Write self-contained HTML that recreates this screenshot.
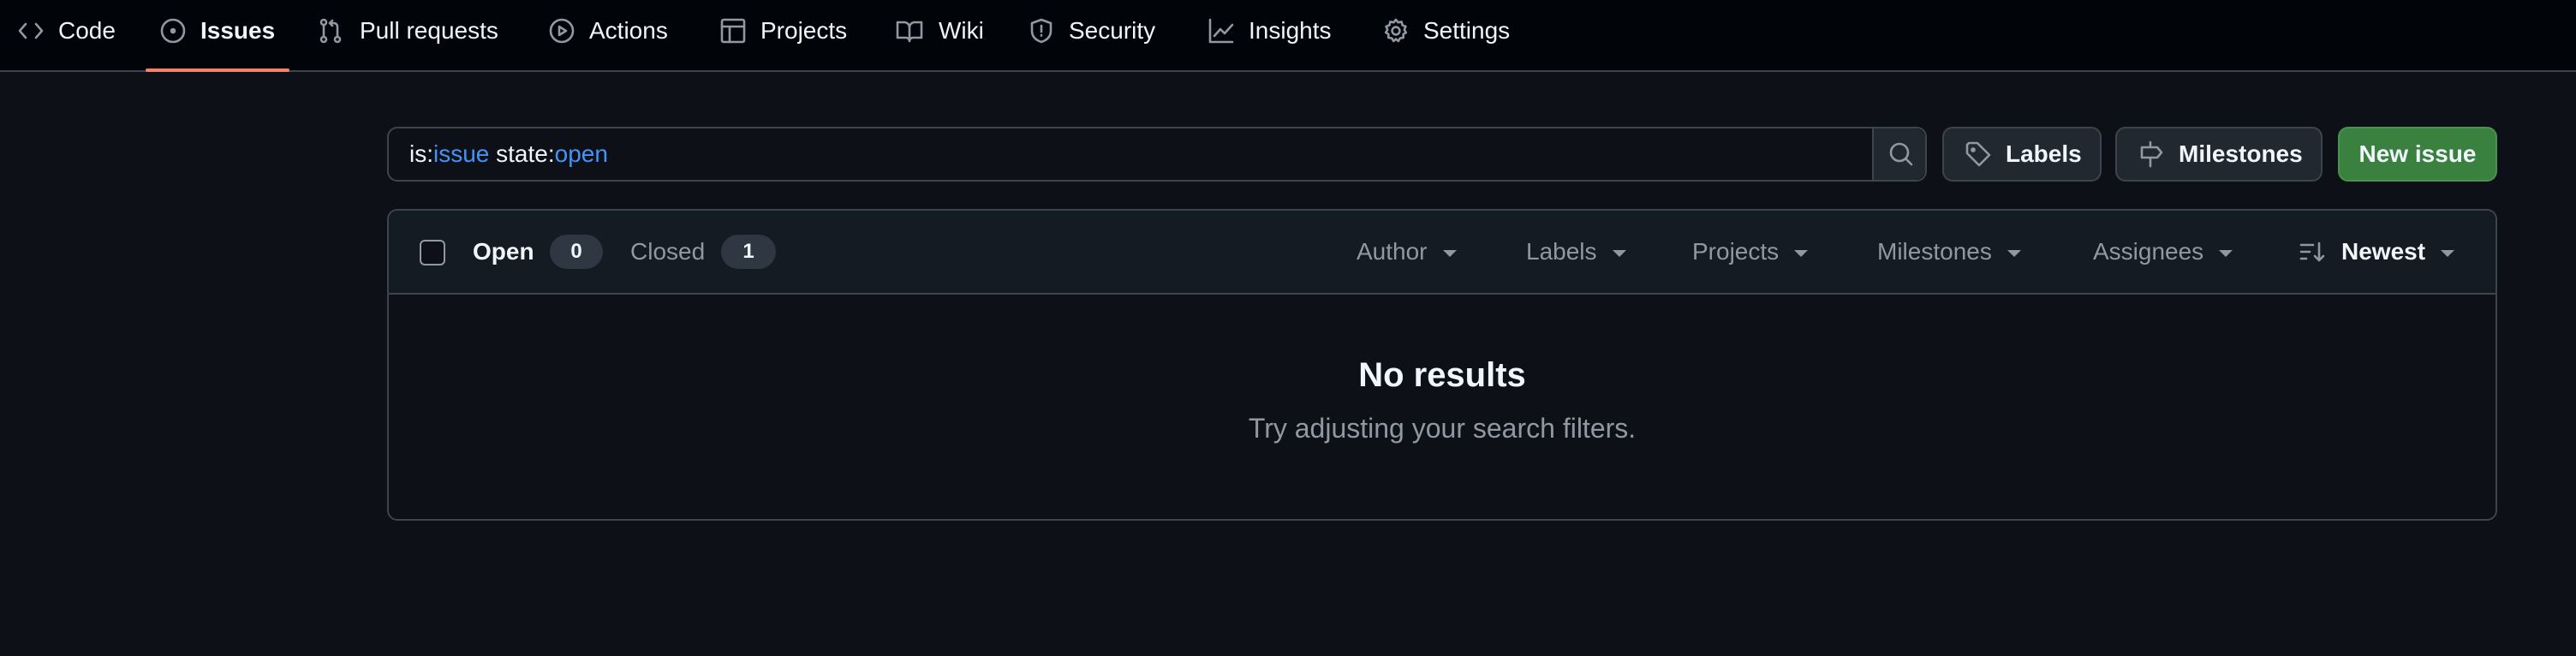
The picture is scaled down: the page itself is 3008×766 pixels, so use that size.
<!DOCTYPE html>
<html><head><meta charset="utf-8"><style>
html{zoom:2}
*{box-sizing:border-box;margin:0;padding:0}
body{width:1504px;height:383px;background:#0d1117;font-family:"Liberation Sans",Arial,sans-serif;color:#f0f6fc;position:relative;overflow:hidden;font-size:14px}
.nav{position:absolute;left:0;top:0;width:1504px;height:42px;background:#010409;border-bottom:1px solid #3d444d}
.a{position:absolute;top:0;line-height:36px;font-size:14px;color:#f0f6fc;white-space:nowrap}
.ic{position:absolute;top:10px}
svg{fill:none;stroke:#9198a1;stroke-width:1.3;stroke-linecap:round;stroke-linejoin:round}
.ul{position:absolute;left:85px;top:39px;width:84px;height:2px;background:#f78166;border-radius:2px}
.search{position:absolute;left:226px;top:74px;width:899px;height:32px;border:1px solid #3d444d;border-radius:6px;background:#0d1117}
.search .t{position:absolute;left:12px;top:0;line-height:30px;font-size:14px}
.blue{color:#4493f8}
.sb{position:absolute;right:0;top:0;width:31px;height:30px;background:#212830;border-left:1px solid #3d444d;border-radius:0 6px 6px 0}
.btn{position:absolute;top:74px;height:32px;border:1px solid #3d444d;border-radius:6px;background:#212830;font-size:14px;font-weight:bold;line-height:30px;color:#f0f6fc}
.box{position:absolute;left:226px;top:122px;width:1232px;height:182px;border:1px solid #3d444d;border-radius:6px;background:#0d1117;overflow:hidden}
.hd{position:absolute;left:0;top:0;width:100%;height:49px;background:#151b23;border-bottom:1px solid #3d444d}
.h{position:absolute;top:0;line-height:48px;font-size:14px;white-space:nowrap}
.f{color:#9198a1}
.badge{position:absolute;top:14px;height:20px;border-radius:10px;background:#2f3742;font-size:12px;font-weight:bold;line-height:20px;text-align:center;color:#f0f6fc}
.car{display:inline-block;width:0;height:0;border-left:4px solid transparent;border-right:4px solid transparent;border-top:4px solid #9198a1;vertical-align:middle;margin-left:9px}
</style></head><body>
<div class="nav">
<svg class="ic" style="left:10px" width="16" height="16" viewBox="0 0 16 16"><path d="M5 4L1.5 8 5 12M11 4l3.5 4-3.5 4"/></svg>
<div class="a" style="left:34px">Code</div>
<svg class="ic" style="left:93px" width="16" height="16" viewBox="0 0 16 16"><circle cx="8" cy="8" r="6.5"/><circle cx="8" cy="8" r="1" fill="#9198a1"/></svg>
<div class="a" style="left:117px;font-weight:bold">Issues</div>
<svg class="ic" style="left:185px" width="16" height="16" viewBox="0 0 16 16"><circle cx="4" cy="3" r="1.5"/><circle cx="4" cy="13" r="1.5"/><circle cx="12" cy="13" r="1.5"/><path d="M4 4.5v7M12 11.5V5.5a2 2 0 0 0-2-2H7.5M9 2L7.5 3.5 9 5"/></svg>
<div class="a" style="left:210px">Pull requests</div>
<svg class="ic" style="left:320px" width="16" height="16" viewBox="0 0 16 16"><circle cx="8" cy="8" r="6.5"/><path d="M6.5 5.5v5l4-2.5z"/></svg>
<div class="a" style="left:344px">Actions</div>
<svg class="ic" style="left:420px" width="16" height="16" viewBox="0 0 16 16"><rect x="1.5" y="1.5" width="13" height="13" rx="1"/><path d="M1.5 5.5h13M6 5.5v9"/></svg>
<div class="a" style="left:444px">Projects</div>
<svg class="ic" style="left:523px" width="16" height="16" viewBox="0 0 16 16"><path d="M1 3h4a3 3 0 0 1 3 3v8a2 2 0 0 0-2-2H1zM15 3h-4a3 3 0 0 0-3 3v8a2 2 0 0 1 2-2h5z"/></svg>
<div class="a" style="left:548px">Wiki</div>
<svg class="ic" style="left:600px" width="16" height="16" viewBox="0 0 16 16"><path d="M8 1.5l5.5 2v4.5c0 3.5-2.5 5.5-5.5 6.5-3-1-5.5-3-5.5-6.5V3.5z"/><path d="M8 5v3.5M8 10.5v.3"/></svg>
<div class="a" style="left:624px">Security</div>
<svg class="ic" style="left:705px" width="16" height="16" viewBox="0 0 16 16"><path d="M1.5 1.5v13h13M4 11l3.5-4 2.5 2.5 4.5-5"/></svg>
<div class="a" style="left:729px">Insights</div>
<svg class="ic" style="left:807px" width="16" height="16" viewBox="0 0 16 16"><circle cx="8" cy="8" r="2.2"/><path d="M8 1.5l1.3 1.6 2-.4.5 2 1.9.8-.8 1.9 1 1.6-1.6 1 .1 2-2 .3-1 1.7-1.4-1.2-1.4 1.2-1-1.7-2-.3.1-2-1.6-1 1-1.6-.8-1.9 1.9-.8.5-2 2 .4z"/></svg>
<div class="a" style="left:831px">Settings</div>
<div class="ul" style="top:40px"></div>
</div>

<div class="search"><div class="t">is:<span class="blue">issue</span> state:<span class="blue">open</span></div>
<div class="sb"><svg style="position:absolute;left:8px;top:7px" width="16" height="16" viewBox="0 0 16 16"><circle cx="7" cy="7" r="5"/><path d="M10.5 10.5L14 14"/></svg></div></div>

<div class="btn" style="left:1134px;width:93px"><svg style="position:absolute;left:12px;top:7px" width="16" height="16" viewBox="0 0 16 16"><path d="M1.5 2.5v5l7 7 6-6-7-7h-5z"/><circle cx="5" cy="5.5" r=".8" fill="#9198a1"/></svg><span style="position:absolute;left:36px">Labels</span></div>
<div class="btn" style="left:1235px;width:121px"><svg style="position:absolute;left:12px;top:7px" width="16" height="16" viewBox="0 0 16 16"><path d="M7.5 1v3M7.5 10v5M2.5 4h9l2.5 3-2.5 3h-9z"/></svg><span style="position:absolute;left:36px">Milestones</span></div>
<div class="btn" style="left:1365px;width:93px;background:#3a8140;border-color:#4a9150;text-align:center">New issue</div>

<div class="box">
<div class="hd">
<div style="position:absolute;left:18px;top:17px;width:15px;height:15px;border:1px solid #9198a1;border-radius:3px;background:#0d1117"></div>
<div class="h" style="left:49px;font-weight:bold">Open</div>
<div class="badge" style="left:94px;width:31px">0</div>
<div class="h f" style="left:141px">Closed</div>
<div class="badge" style="left:194px;width:32px">1</div>
<div class="h f" style="left:565px">Author<span class="car"></span></div>
<div class="h f" style="left:664px">Labels<span class="car"></span></div>
<div class="h f" style="left:761px">Projects<span class="car"></span></div>
<div class="h f" style="left:869px">Milestones<span class="car"></span></div>
<div class="h f" style="left:995px">Assignees<span class="car"></span></div>
<svg style="position:absolute;left:1115px;top:16px" width="16" height="16" viewBox="0 0 16 16"><path d="M1.5 4h7M1.5 8h5M1.5 12h3M12 3v10M9.5 10.5L12 13l2.5-2.5"/></svg>
<div class="h" style="left:1140px;font-weight:bold">Newest<span class="car"></span></div>
</div>
<div style="position:absolute;left:0;width:100%;top:84px;text-align:center;font-size:20px;font-weight:bold;line-height:24px">No results</div>
<div style="position:absolute;left:0;width:100%;top:117px;text-align:center;font-size:16px;color:#9198a1;line-height:20px">Try adjusting your search filters.</div>
</div>
</body></html>
